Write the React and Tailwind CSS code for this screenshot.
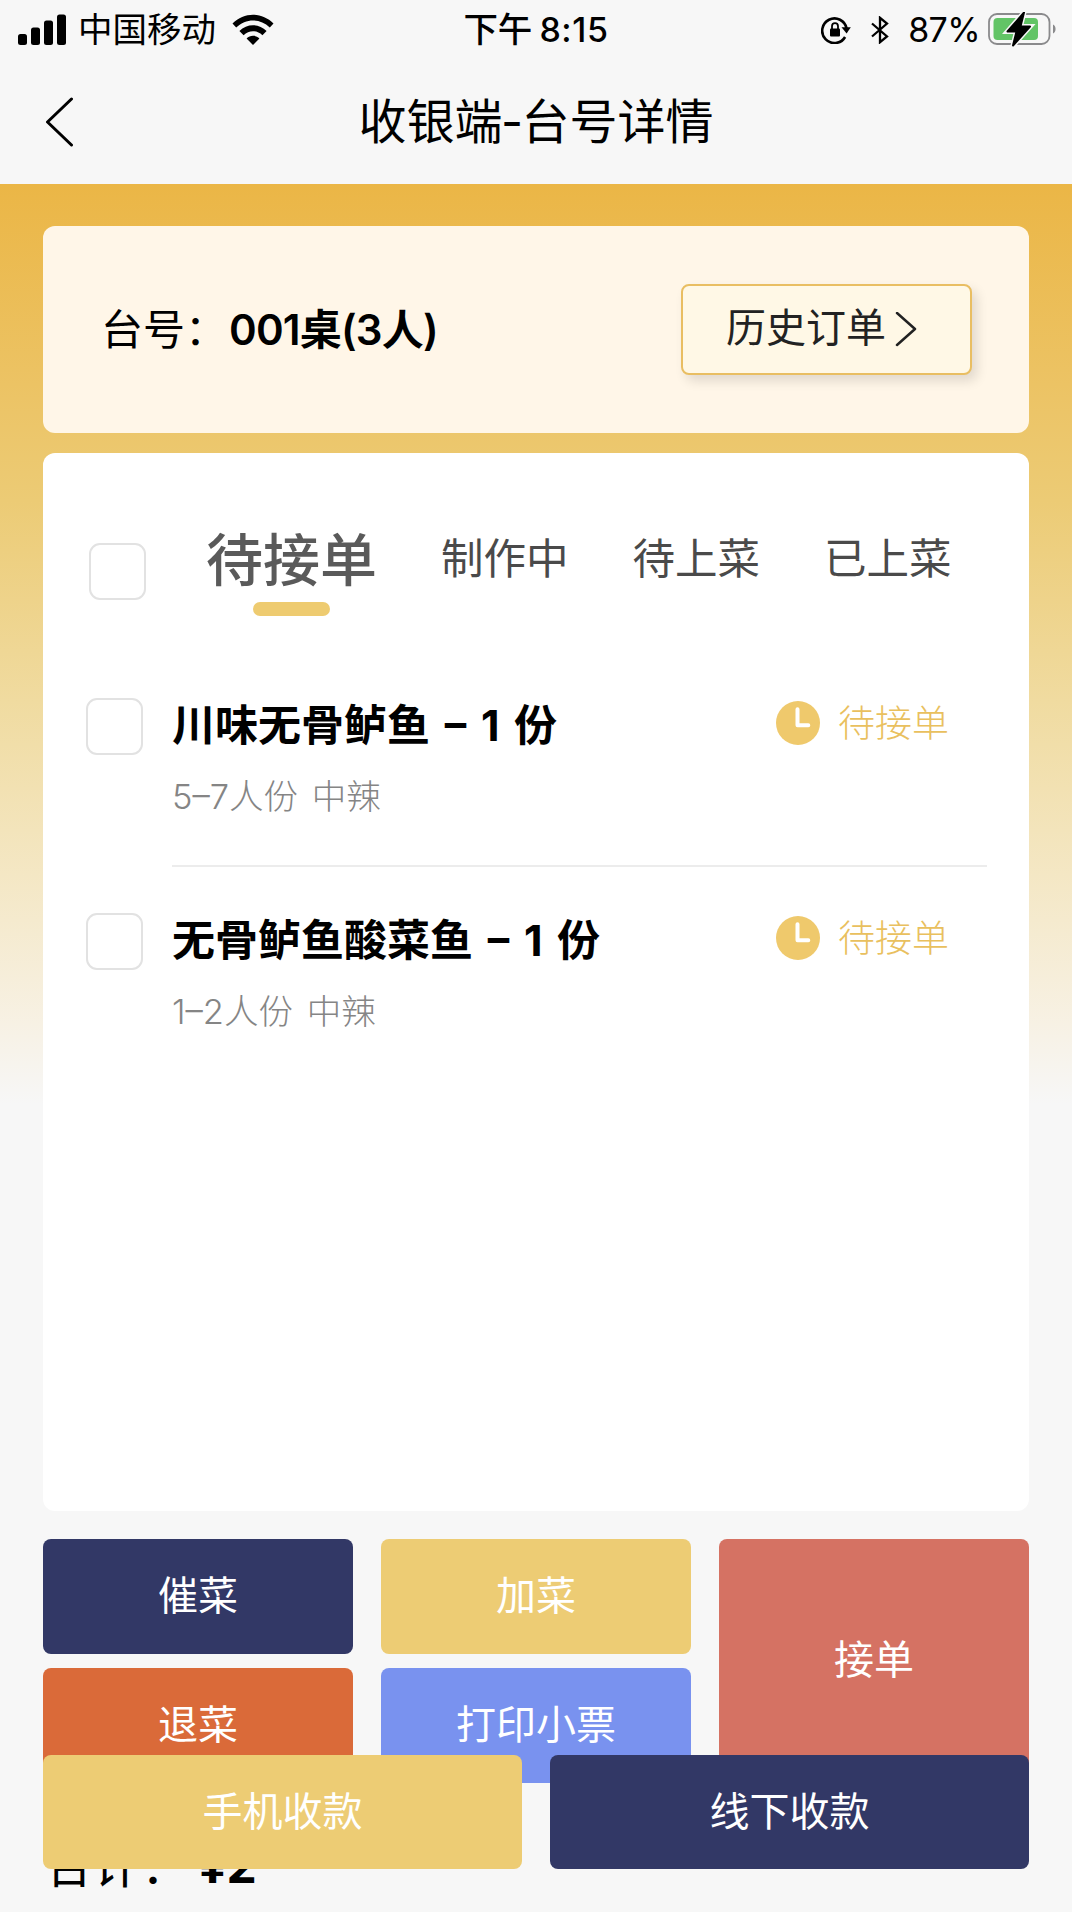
import React, { useState } from 'react';

const TABS = [
  { id: 'pending', label: '待接单' },
  { id: 'cooking', label: '制作中' },
  { id: 'ready', label: '待上菜' },
  { id: 'served', label: '已上菜' },
];

const DISHES = [
  { id: 1, name: '川味无骨鲈鱼', count: 1, spec: '5–7人份 中辣', status: '待接单' },
  { id: 2, name: '无骨鲈鱼酸菜鱼', count: 1, spec: '1–2人份 中辣', status: '待接单' },
];

function SignalIcon() {
  return (
    <svg width="48" height="32" viewBox="0 0 48 32" className="shrink-0">
      <rect x="0" y="20" width="9" height="11" rx="2.5" />
      <rect x="13" y="13.5" width="9" height="17.5" rx="2.5" />
      <rect x="26" y="6.5" width="9" height="24.5" rx="2.5" />
      <rect x="39" y="0.5" width="9" height="30.5" rx="2.5" />
    </svg>
  );
}

function WifiIcon() {
  return (
    <svg width="42" height="32" viewBox="0 0 42 32" className="shrink-0">
      <path d="M0.5 9.6C12 -2.2 30 -2.2 41.5 9.6L37.8 13.6C28 4.2 14 4.2 4.2 13.6Z" />
      <path d="M7.4 17C15 9.2 27 9.2 34.6 17L30.4 21.2C25 16 17 16 11.6 21.2Z" />
      <path d="M14.6 24.4C18 21 24 21 27.4 24.4L21 31Z" />
    </svg>
  );
}

function RotationLockIcon() {
  return (
    <svg width="30" height="28" viewBox="0 0 30 28" className="shrink-0">
      <path
        d="M24.1 21A12.3 12.3 0 1 1 25.6 12.6"
        fill="none"
        stroke="black"
        strokeWidth="2.6"
      />
      <path d="M20.5 11.2H29.8L25.6 17.6Z" />
      <rect x="9" y="12.5" width="10" height="8" rx="1" />
      <path d="M11 13V10.2a3 3 0 0 1 6 0V13" fill="none" stroke="black" strokeWidth="1.8" />
    </svg>
  );
}

function BluetoothIcon() {
  return (
    <svg width="18" height="28" viewBox="0 0 18 28" className="shrink-0">
      <path
        d="M1 7.5L16 20.4L9 26.2V1.8L16 7.6L1 20.5"
        fill="none"
        stroke="black"
        strokeWidth="2.3"
      />
    </svg>
  );
}

function BatteryIcon() {
  return (
    <svg width="68" height="36" viewBox="0 0 68 36" className="shrink-0">
      <rect x="1" y="2" width="60.5" height="30" rx="8" fill="none" stroke="#8a8a8c" strokeWidth="1.8" />
      <rect x="5.5" y="6" width="44.5" height="22" rx="4" fill="#62c466" />
      <path d="M65 12.5c3.4 1.2 3.4 7.8 0 9Z" fill="#8a8a8c" />
      <path
        d="M36 0.5L19.5 19.5H28.5L25 33.5L42 14.5H32.5Z"
        stroke="#f7f7f7"
        strokeWidth="5"
        fill="#f7f7f7"
      />
      <path d="M36 0.5L19.5 19.5H28.5L25 33.5L42 14.5H32.5Z" stroke="black" strokeWidth="2" strokeLinejoin="round" />
    </svg>
  );
}

function ClockIcon() {
  return (
    <svg width="44" height="44" viewBox="0 0 44 44" className="shrink-0">
      <circle cx="22" cy="22" r="22" fill="#efc96c" />
      <path
        d="M21.5 8.2V24.2H32.3"
        fill="none"
        stroke="white"
        strokeWidth="4"
        strokeLinecap="round"
        strokeLinejoin="round"
      />
    </svg>
  );
}

function Checkbox({ checked, onChange, className }) {
  return (
    <button
      type="button"
      role="checkbox"
      aria-checked={checked}
      onClick={onChange}
      className={`size-[57px] shrink-0 rounded-[11px] border-2 border-[#e2e2e2] ${
        checked ? 'bg-[#eecd74]' : 'bg-white'
      } ${className}`}
    />
  );
}

function StatusBar() {
  return (
    <div className="grid h-[59px] grid-cols-[1fr_auto_1fr] items-center text-[34px] leading-[58px]">
      <div className="flex items-center pl-[18px]">
        <SignalIcon />
        <span className="ml-3 mr-4 text-[34.5px]">中国移动</span>
        <WifiIcon />
      </div>
      <div className="flex gap-[7px] font-medium">
        <span className="text-[34.5px]">下午</span>
        <span className="tracking-[0.6px]">8:15</span>
      </div>
      <div className="flex items-center justify-end pr-4">
        <RotationLockIcon />
        <span className="ml-5 mr-[19px] flex">
          <BluetoothIcon />
        </span>
        <span className="mr-2 tracking-[-0.6px]">87%</span>
        <BatteryIcon />
      </div>
    </div>
  );
}

function DishRow({ dish, checked, onToggle, last }) {
  return (
    <li className="flex h-[215px] pl-[43px] pr-[42px]">
      <Checkbox checked={checked} onChange={onToggle} className="mt-[46px]" />
      <div className={`ml-[29px] flex flex-1 justify-between ${last ? '' : 'border-b-2 border-[#ececec]'}`}>
        <div>
          <div className="mt-[43px] text-[43px] font-bold leading-[60px] text-black [word-spacing:4.5px]">
            {dish.name} – {dish.count} 份
          </div>
          <div className="mt-[17px] text-[34.5px] font-light leading-[50px] text-[#858585] [word-spacing:4px]">
            {dish.spec}
          </div>
        </div>
        <div className="mr-[38px] mt-[49px] flex h-11 items-center gap-[18px] text-[37px] font-light text-[#e9c05e]">
          <ClockIcon />
          <span className="pt-[2px]">{dish.status}</span>
        </div>
      </div>
    </li>
  );
}

function ActionButton({ children, className }) {
  return (
    <button
      type="button"
      className={`flex items-center justify-center rounded-lg text-[40px] leading-none text-white ${className}`}
    >
      {children}
    </button>
  );
}

export default function App() {
  const [activeTab, setActiveTab] = useState('pending');
  const [selected, setSelected] = useState([]);

  const toggle = (id) =>
    setSelected((prev) => (prev.includes(id) ? prev.filter((x) => x !== id) : [...prev, id]));

  const allSelected = selected.length === DISHES.length;

  return (
    <div className="relative flex h-[1912px] w-[1072px] flex-col overflow-hidden bg-[#f7f7f7] font-['Inter','Noto_Sans_CJK_SC',sans-serif] text-black">
      <header className="h-[184px] shrink-0 bg-[#f7f7f7]">
        <StatusBar />
        <div className="grid h-[125px] grid-cols-[1fr_auto_1fr] items-center">
          <svg width="30" height="50" viewBox="0 0 30 50" className="ml-[45px]">
            <path
              d="M26.5 2L2.5 25L26.5 48"
              fill="none"
              stroke="black"
              strokeWidth="3"
              strokeLinecap="round"
              strokeLinejoin="round"
            />
          </svg>
          <h1 className="text-[48px] leading-[60px]">
            收银端<span className="-mx-[1.5px]">-</span>台号详情
          </h1>
        </div>
      </header>

      <main className="flex flex-1 flex-col bg-[linear-gradient(#ebb646_0px,#ecc364_200px,#eccb75_317px,#f0dba0_517px,#f4e7c4_690px,#f7f1e4_840px,#f7f7f7_920px)] px-[43px] pt-[42px]">
        <section className="flex h-[207px] shrink-0 items-center justify-between rounded-xl bg-[#fff6e8] pl-[58px] pr-[57px]">
          <div className="flex items-center text-[42px] leading-[60px]">
            <span>台号：</span>
            <span className="ml-[2px] font-semibold tracking-[-0.8px]">001桌(3人)</span>
          </div>
          <button
            type="button"
            className="flex h-[91px] w-[291px] items-center rounded-lg border-[2.5px] border-[#e9be62] bg-[#fff8e6] pl-[43px] text-[40px] text-[#222] shadow-[5px_6px_12px_rgba(0,0,0,0.12)]"
          >
            <span className="pb-[3px]">历史订单</span>
            <svg width="22" height="36" viewBox="0 0 22 36" className="ml-[9px]">
              <path d="M2 1L20 17L2 33" fill="none" stroke="#222" strokeWidth="2.5" strokeLinecap="round" strokeLinejoin="round" />
            </svg>
          </button>
        </section>

        <section className="mt-5 h-[1058px] shrink-0 rounded-xl bg-white">
          <div className="flex h-[199px] pl-[46px]">
            <Checkbox
              checked={allSelected}
              onChange={() => setSelected(allSelected ? [] : DISHES.map((d) => d.id))}
              className="mt-[90px]"
            />
            <nav className="ml-[60px] mt-[76px] flex h-[90px] gap-[64px]">
              {TABS.map((tab) => {
                const active = tab.id === activeTab;
                return (
                  <button
                    key={tab.id}
                    type="button"
                    onClick={() => setActiveTab(tab.id)}
                    className={`flex flex-col items-center ${
                      active ? 'text-[57px] font-medium leading-[64px] text-[#5a5a5a]' : 'text-[42.5px] leading-[60px] text-[#4a4a4a]'
                    }`}
                  >
                    {tab.label}
                    {active && <span className="mt-[9px] h-3.5 w-[77px] rounded-full bg-[#eecb70]" />}
                  </button>
                );
              })}
            </nav>
          </div>

          <ul>
            {DISHES.map((dish, i) => (
              <DishRow
                key={dish.id}
                dish={dish}
                checked={selected.includes(dish.id)}
                onToggle={() => toggle(dish.id)}
                last={i === DISHES.length - 1}
              />
            ))}
          </ul>
        </section>

        <div className="mt-7 grid shrink-0 grid-cols-3 grid-rows-[115px_115px] gap-x-[28px] gap-y-3.5">
          <ActionButton className="bg-[#323866] pb-[2px]">催菜</ActionButton>
          <ActionButton className="bg-[#edcc74] pb-[2px]">加菜</ActionButton>
          <ActionButton className="row-span-2 bg-[#d57263] pb-[3px]">接单</ActionButton>
          <ActionButton className="bg-[#da6a39] pb-[2px]">退菜</ActionButton>
          <ActionButton className="bg-[#7992ef] pb-[2px]">打印小票</ActionButton>
        </div>

        <div className="mt-[53px] flex shrink-0 items-baseline pl-0.5 text-[48px] leading-[60px]">
          <span>合计：</span>
          <span className="ml-2.5 font-bold">¥2</span>
        </div>
      </main>

      {/* payment bar sits over the page content */}
      <footer className="absolute inset-x-0 bottom-[43px] grid h-[114px] grid-cols-2 gap-x-[28px] px-[43px]">
        <ActionButton className="bg-[#edcc74]">手机收款</ActionButton>
        <ActionButton className="bg-[#323866]">线下收款</ActionButton>
      </footer>
    </div>
  );
}
